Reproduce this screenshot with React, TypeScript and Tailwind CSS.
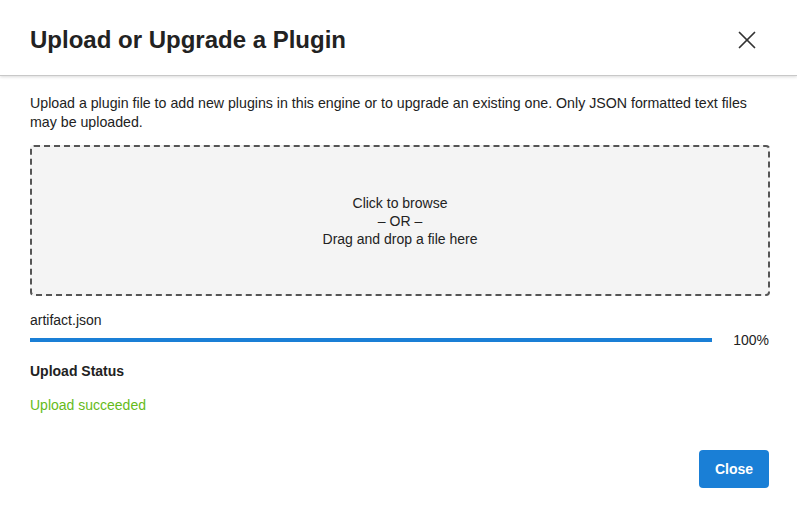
import { X } from 'lucide-react';

function App() {
  return (
    <div className="w-[797px] h-[507px] bg-white text-[#222] overflow-hidden" style={{ fontFamily: '"Liberation Sans", Arial, sans-serif' }}>
      <div className="h-[76px] pt-[4px] flex items-center justify-between pl-[30px] pr-[35px] border-b border-[#c8c8c8] shadow-[0_1px_3px_rgba(0,0,0,0.15)]">
        <h1 className="text-[24px] font-bold text-[#222]">Upload or Upgrade a Plugin</h1>
        <button className="text-[#333]">
          <X size={30} strokeWidth={1.4} />
        </button>
      </div>

      <div className="pl-[30px] pr-[27px] pt-[18px]">
        <p className="text-[14.2px] leading-[19px] text-[#222]">
          Upload a plugin file to add new plugins in this engine or to upgrade an existing one. Only JSON formatted text files may be uploaded.
        </p>

        <div className="mt-[13px] h-[151px] rounded-[4px] border-2 border-dashed border-[#555] bg-[#f4f4f4] flex flex-col items-center justify-center text-[14px] leading-[18px] text-[#222]">
          <span>Click to browse</span>
          <span>– OR –</span>
          <span>Drag and drop a file here</span>
        </div>

        <div className="mt-[15px] text-[14px] leading-[18px]">artifact.json</div>
        <div className="flex items-center mt-[2px] h-[18px]">
          <div className="h-[4px] w-[682px] bg-[#1a7fd6]" />
          <span className="ml-auto text-[14px] mr-px">100%</span>
        </div>

        <div className="mt-[13px] text-[14px] leading-[18px] font-bold">Upload Status</div>
        <div className="mt-[16px] text-[14px] leading-[18px] text-[#66bb1a]">Upload succeeded</div>

        <div className="flex justify-end mt-[36px]">
          <button className="w-[70px] h-[38px] mr-px rounded-[4px] bg-[#1a7fd6] text-white text-[14px] font-bold">Close</button>
        </div>
      </div>
    </div>
  );
}

export default App;
